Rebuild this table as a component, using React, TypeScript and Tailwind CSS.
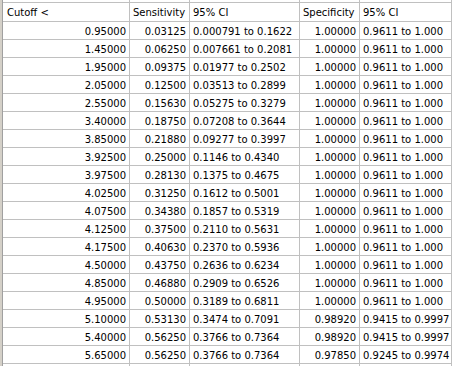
import React from "react";

const rows: string[][] = [
  ["0.95000", "0.03125", "0.000791 to 0.1622", "1.00000", "0.9611 to 1.000"],
  ["1.45000", "0.06250", "0.007661 to 0.2081", "1.00000", "0.9611 to 1.000"],
  ["1.95000", "0.09375", "0.01977 to 0.2502", "1.00000", "0.9611 to 1.000"],
  ["2.05000", "0.12500", "0.03513 to 0.2899", "1.00000", "0.9611 to 1.000"],
  ["2.55000", "0.15630", "0.05275 to 0.3279", "1.00000", "0.9611 to 1.000"],
  ["3.40000", "0.18750", "0.07208 to 0.3644", "1.00000", "0.9611 to 1.000"],
  ["3.85000", "0.21880", "0.09277 to 0.3997", "1.00000", "0.9611 to 1.000"],
  ["3.92500", "0.25000", "0.1146 to 0.4340", "1.00000", "0.9611 to 1.000"],
  ["3.97500", "0.28130", "0.1375 to 0.4675", "1.00000", "0.9611 to 1.000"],
  ["4.02500", "0.31250", "0.1612 to 0.5001", "1.00000", "0.9611 to 1.000"],
  ["4.07500", "0.34380", "0.1857 to 0.5319", "1.00000", "0.9611 to 1.000"],
  ["4.12500", "0.37500", "0.2110 to 0.5631", "1.00000", "0.9611 to 1.000"],
  ["4.17500", "0.40630", "0.2370 to 0.5936", "1.00000", "0.9611 to 1.000"],
  ["4.50000", "0.43750", "0.2636 to 0.6234", "1.00000", "0.9611 to 1.000"],
  ["4.85000", "0.46880", "0.2909 to 0.6526", "1.00000", "0.9611 to 1.000"],
  ["4.95000", "0.50000", "0.3189 to 0.6811", "1.00000", "0.9611 to 1.000"],
  ["5.10000", "0.53130", "0.3474 to 0.7091", "0.98920", "0.9415 to 0.9997"],
  ["5.40000", "0.56250", "0.3766 to 0.7364", "0.98920", "0.9415 to 0.9997"],
  ["5.65000", "0.56250", "0.3766 to 0.7364", "0.97850", "0.9245 to 0.9974"],
];

const cell = "shrink-0 border-r border-b border-[#c0c0c0] flex items-center overflow-hidden whitespace-nowrap";
const widths = ["w-[127px]", "w-[60px]", "w-[110px]", "w-[60px]", "w-[92px]"];
const aligns = ["justify-end pr-[3px]", "justify-end pr-[3px]", "justify-start pl-[3px]", "justify-end pr-[3px]", "justify-start pl-[3px]"];

function Row({ cells, h, header }: { cells: string[]; h: string; header?: boolean }) {
  return (
    <div className={`flex shrink-0 ${h}`}>
      {cells.map((c, i) => (
        <div
          key={i}
          className={`${cell} ${widths[i]} ${header ? (i === 0 ? "justify-start pl-[4px]" : "justify-start pl-[3px]") : aligns[i]} pt-[2px]`}
        >
          {c}
        </div>
      ))}
    </div>
  );
}

export default function App() {
  return (
    <div
      className="flex h-[366px] w-[455px] overflow-hidden bg-white text-[10px] leading-none text-black"
      style={{ fontFamily: '"DejaVu Sans", Verdana, sans-serif' }}
    >
      <div className="w-[3px] shrink-0 border-r border-[#a0a0a0] bg-[#d4d0c8]" />
      <div className="flex flex-col">
        <Row cells={["", "", "", "", ""]} h="h-[3px]" />
        <Row cells={["Cutoff <", "Sensitivity", "95% CI", "Specificity", "95% CI"]} h="h-[19px]" header />
        {rows.map((r, i) => (
          <Row key={i} cells={r} h="h-[18px]" />
        ))}
        <Row cells={["", "", "", "", ""]} h="h-[18px]" />
      </div>
    </div>
  );
}
